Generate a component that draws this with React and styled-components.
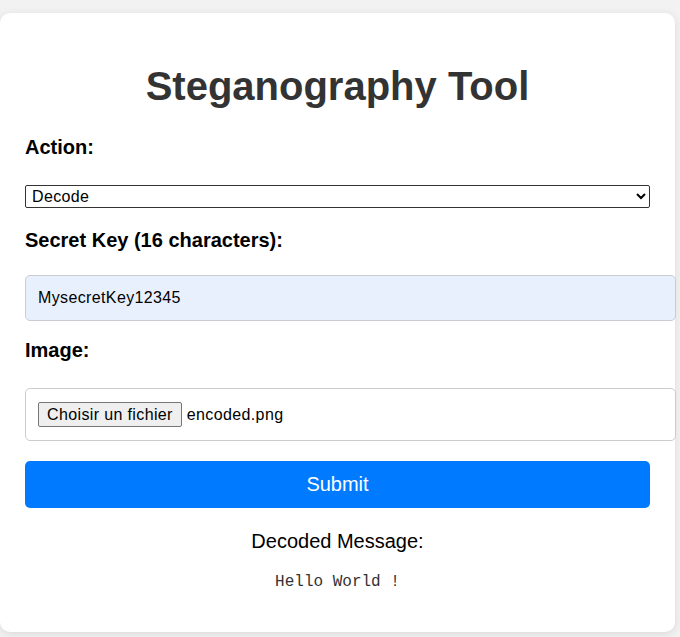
import React from "react";
import styled, { createGlobalStyle } from "styled-components";

const Global = createGlobalStyle`
  html, body {
    margin: 0;
    padding: 0;
    background: #f2f2f2;
    font-family: "Liberation Sans", Arial, sans-serif;
  }
  * { box-sizing: content-box; }
`;

const Page = styled.div`
  padding-top: 13px;
  min-height: 624px;
`;

const Card = styled.div`
  width: 625px;
  padding: 25px;
  background: #ffffff;
  border-radius: 10px;
  box-shadow: 0 2px 10px rgba(0, 0, 0, 0.1);
`;

const Title = styled.h1`
  margin: 25px 0 27px;
  text-align: center;
  color: #333333;
  font-size: 40px;
  font-weight: bold;
  line-height: 46px;
`;

const Label = styled.label`
  display: block;
  font-size: 20px;
  line-height: 23px;
  font-weight: bold;
  color: #000;
  margin-bottom: ${(p) => p.$gap}px;
`;

const Select = styled.select`
  display: block;
  width: 625px;
  height: 23px;
  box-sizing: border-box;
  margin: 0 0 21px;
  font-family: "Liberation Sans", Arial, sans-serif;
  font-size: 16px;
  letter-spacing: 0.35px;
  color: #000;
  background: #fff;
  border: 1px solid #333;
  border-radius: 2px;
  padding: 0 2px;
`;

const TextInput = styled.input`
  display: block;
  width: 100%;
  height: 20px;
  padding: 12px;
  margin: 0 0 18px;
  border: 1px solid #c9ccd1;
  border-radius: 5px;
  background: #e8f0fe;
  font-family: "Liberation Sans", Arial, sans-serif;
  font-size: 16px;
  letter-spacing: 0.37px;
  color: #000;
  outline: none;
`;

const FileField = styled.div`
  display: flex;
  align-items: center;
  gap: 5px;
  width: 100%;
  height: 27px;
  padding: 12px;
  margin-bottom: 20px;
  border: 1px solid #ccc;
  border-radius: 5px;
  background: #fff;
  font-size: 16px;
  letter-spacing: 0.37px;
  color: #000;
`;

const FileButton = styled.span`
  display: inline-flex;
  align-items: center;
  height: 23px;
  padding: 0 8px;
  background: #efefef;
  border: 1px solid #767676;
  border-radius: 2px;
  font-size: 16px;
  color: #000;
`;

const FileName = styled.span`
  font-size: 16px;
`;

const Submit = styled.button`
  display: block;
  width: 625px;
  height: 47px;
  padding: 0;
  border: none;
  border-radius: 5px;
  background: #007bff;
  color: #fff;
  font-family: "Liberation Sans", Arial, sans-serif;
  font-size: 20px;
  cursor: pointer;
`;

const ResultTitle = styled.div`
  margin-top: 22px;
  text-align: center;
  font-size: 20px;
  line-height: 23px;
  color: #000;
`;

const ResultText = styled.pre`
  margin: 20px 0 16px;
  text-align: center;
  font-family: "Liberation Mono", "Courier New", monospace;
  font-size: 16px;
  line-height: 18px;
  color: #333;
`;

export default function App() {
  return (
    <>
      <Global />
      <Page>
        <Card>
          <Title>Steganography Tool</Title>
          <Label $gap={26}>Action:</Label>
          <Select defaultValue="decode">
            <option value="encode">Encode</option>
            <option value="decode">Decode</option>
          </Select>
          <Label $gap={23}>Secret Key (16 characters):</Label>
          <TextInput type="text" defaultValue="MysecretKey12345" />
          <Label $gap={26}>Image:</Label>
          <FileField>
            <FileButton>Choisir un fichier</FileButton>
            <FileName>encoded.png</FileName>
          </FileField>
          <Submit type="button">Submit</Submit>
          <ResultTitle>Decoded Message:</ResultTitle>
          <ResultText>Hello World !</ResultText>
        </Card>
      </Page>
    </>
  );
}
